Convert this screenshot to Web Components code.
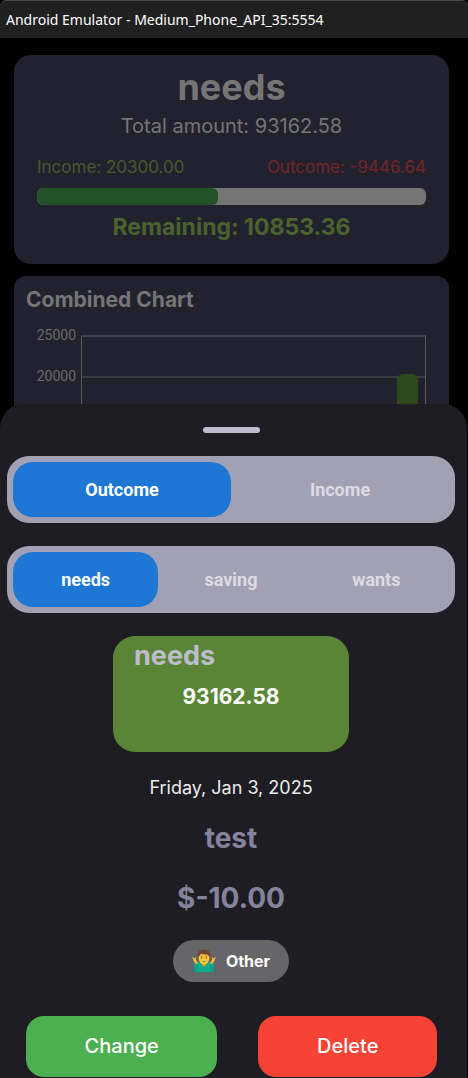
<!DOCTYPE html>
<html lang="en">
<head>
<meta charset="utf-8">
<title>Android Emulator - Medium_Phone_API_35:5554</title>
<style>
  body { margin: 0; background: #000; font-family: Inter, "Liberation Sans", sans-serif; }
</style>
</head>
<body>
<phone-window caption="Android Emulator - Medium_Phone_API_35:5554">
  <balance-card name="needs" total="93162.58" income="20300.00" outcome="-9446.64" remaining="10853.36" progress="46.5"></balance-card>
  <chart-card heading="Combined Chart"></chart-card>
  <bottom-sheet slot="sheet">
    <segment-control label="Transaction type" options="Outcome,Income"></segment-control>
    <segment-control label="Wallet" options="needs,saving,wants"></segment-control>
    <wallet-tile name="needs" amount="93162.58"></wallet-tile>
    <transaction-info date="Friday, Jan 3, 2025" name="test" amount="$-10.00"></transaction-info>
    <category-chip>Other</category-chip>
    <action-bar></action-bar>
  </bottom-sheet>
</phone-window>

<script>
class BaseElement extends HTMLElement {
  connectedCallback() {
    if (this.shadowRoot) return;
    this.attachShadow({ mode: "open" }).innerHTML = "<style>:host,*{box-sizing:border-box}</style>" + this.view(name => this.getAttribute(name));
  }
}

customElements.define("phone-window", class extends BaseElement {
  view(a) {
    return `<style>
      :host { display: flex; flex-direction: column; min-height: 100vh; }
      header { height: 38px; background: #202020; border-top: 1px solid #484848; border-radius: 6px 6px 0 0;
        display: flex; align-items: center; padding: 0 6px; color: #fff; font: 14px/20px "Noto Sans", "Open Sans", sans-serif; }
      .screen { flex: 1; position: relative; overflow: hidden; background: #000; }
      main { padding: 17px 19px 0 14px; display: grid; gap: 12px; }
      .overlay { position: absolute; left: 0; right: 1px; bottom: 0; }
    </style>
    <header>${a("caption")}</header>
    <div class="screen"><main><slot></slot></main><div class="overlay"><slot name="sheet"></slot></div></div>`;
  }
});

customElements.define("balance-card", class extends BaseElement {
  view(a) {
    return `<style>
      :host { display: block; background: #22222e; border-radius: 17px; padding: 10px 23px 21px; text-align: center; color: #757575; }
      h1 { margin: 0; font-size: 36px; line-height: 44px; font-weight: 700; }
      p { margin: 0; font-size: 20px; line-height: 34px; }
      .row { display: flex; justify-content: space-between; font-size: 17px; line-height: 24px; margin-top: 12px; }
      .income { color: #47592e; }
      .outcome { color: #722629; }
      .track { height: 17px; margin-top: 9px; border-radius: 6px; background: #757575; overflow: hidden; }
      .fill { height: 100%; width: ${a("progress")}%; background: #225228; border-radius: 6px; }
      .remaining { color: #4a622d; font-size: 23px; line-height: 32px; margin-top: 6px; font-weight: 700; }
    </style>
    <h1>${a("name")}</h1>
    <p>Total amount: ${a("total")}</p>
    <div class="row"><span class="income">Income: ${a("income")}</span><span class="outcome">Outcome: ${a("outcome")}</span></div>
    <div class="track"><div class="fill"></div></div>
    <div class="remaining">Remaining: ${a("remaining")}</div>`;
  }
});

customElements.define("chart-card", class extends BaseElement {
  view(a) {
    return `<style>
      :host { display: block; background: #22222e; border-radius: 12px; padding: 12px 23px 12px 12px; color: #757575; }
      h2 { margin: 0; font-size: 21px; line-height: 24px; font-weight: 700; }
      .chart { display: grid; grid-template-columns: 50px 1fr; column-gap: 5px; margin-top: 23px; }
      .axis { display: grid; grid-auto-rows: 41px; margin-top: -8px; text-align: right; font: 14px/17px Roboto, sans-serif; color: #6a6a6c; }
      .plot { height: 96px; border: 1px solid #5b5c5c; border-top: 2px solid #404148; border-bottom: 0;
        background: linear-gradient(#3a3b43, #3a3b43) 0 39px / 100% 2px no-repeat;
        display: flex; justify-content: flex-end; align-items: flex-end; padding-right: 7px; }
      .bar { width: 21px; height: 57px; border-radius: 6px 6px 0 0; background: #2e4a1d; }
    </style>
    <h2>${a("heading")}</h2>
    <div class="chart"><div class="axis"><span>25000</span><span>20000</span></div><div class="plot"><div class="bar"></div></div></div>`;
  }
});

customElements.define("bottom-sheet", class extends BaseElement {
  view() {
    return `<style>
      :host { display: flex; flex-direction: column; background: #1e1d23; border-radius: 24px 24px 0 0; padding: 23px 5px 1px 0; }
      .handle { width: 57px; height: 6px; border-radius: 3px; background: #c0bdce; align-self: center; }
    </style><div class="handle"></div><slot></slot>`;
  }
});

customElements.define("segment-control", class extends BaseElement {
  view(a) {
    const group = a("label").replace(/\s/g, "-");
    return `<style>
      :host { display: block; margin: 23px 7px 0 7px; }
      fieldset { margin: 0; min-width: 0; border: 0; padding: 6px; height: 67px; border-radius: 22px; background: #a2a1b4;
        display: grid; grid-auto-flow: column; grid-auto-columns: 1fr; }
      label { display: grid; place-items: center; border-radius: 20px; color: #dddce3; font: 700 18px/24px Roboto, sans-serif; cursor: pointer; }
      label:has(:checked) { background: #1e77d3; color: #fff; }
      input { appearance: none; margin: 0; width: 100%; height: 100%; grid-area: 1 / 1; border-radius: 20px; }
      span { grid-area: 1 / 1; pointer-events: none; }
    </style>
    <fieldset aria-label="${a("label")}">${a("options").split(",").map((o, i) =>
      `<label><input type="radio" name="${group}" value="${o}"${i ? "" : " checked"}><span>${o}</span></label>`).join("")}</fieldset>`;
  }
});

customElements.define("wallet-tile", class extends BaseElement {
  view(a) {
    return `<style>
      :host { display: block; align-self: center; width: 236px; height: 116px; margin-top: 23px; border-radius: 22px; background: #5a8536; padding: 3px 21px; }
      h3 { margin: 0; font-size: 27px; line-height: 34px; font-weight: 700; color: #bdbccb; }
      p { margin: 8px 0 0; font-size: 21px; line-height: 32px; font-weight: 700; color: #fff; text-align: center; }
    </style><h3>${a("name")}</h3><p>${a("amount")}</p>`;
  }
});

customElements.define("transaction-info", class extends BaseElement {
  view(a) {
    return `<style>
      :host { display: block; margin-top: 24px; text-align: center; }
      time { display: block; font-size: 18px; line-height: 24px; color: #ebebec; }
      .big { margin: 20px 0 0; font-size: 28px; line-height: 36px; font-weight: 700; color: #85839b; }
      .big + .big { margin-top: 24px; }
    </style><time datetime="2025-01-03">${a("date")}</time><p class="big">${a("name")}</p><p class="big">${a("amount")}</p>`;
  }
});

customElements.define("category-chip", class extends BaseElement {
  view() {
    return `<style>
      :host { display: flex; align-items: center; gap: 10px; align-self: center; height: 42px; margin-top: 24px; padding: 0 19px;
        border-radius: 21px; background: #666567; color: #fff; font-size: 16px; line-height: 24px; font-weight: 700; }
      svg { display: block; width: 24px; height: 24px; }
    </style>
    <svg viewBox="0 0 24 24" aria-hidden="true">
      <path d="M2.200 23.200v-8.700c0-.9.600-1.200 1.500-1.200h16.600c.9 0 1.500.3 1.500 1.200v8.700z" fill="#12a88e"/>
      <path d="M2.200 15.500l2.100 1.200 1.200 2.300v4.200H2.200zM21.800 15.500l-2.100 1.200-1.200 2.300v4.200h3.300z" fill="#08a08a"/>
      <path d="M3.200 14.500 1.500 11.200.2 8.600l.6-.6 1.700 1.600.6-1 .8.3-.1 2.100 2.300 3.500zM20.800 14.500l1.700-3.300 1.300-2.600-.6-.6-1.700 1.600-.6-1-.8.300.1 2.100-2.300 3.500z" fill="#fbc02d"/>
      <path d="M9.200 12h5.600v2.800L12 17.800l-2.800-3z" fill="#eda51b"/>
      <path d="M5.600 8C5 3 7.800.4 12 .4S19 3 18.400 8l-1 2H6.600z" fill="#6d4434"/>
      <path d="M6.600 7.400C8 6.600 8.700 5.400 9 4.500c1.600 1 4.500 1.300 6.300.8.400 1 1.200 1.800 2.100 2.100.2 4.600-2 7.800-5.400 7.800s-5.600-3.200-5.400-7.800z" fill="#fcc934"/>
      <circle cx="9.700" cy="9" r=".7" fill="#493326"/><circle cx="14.300" cy="9" r=".7" fill="#493326"/>
      <path d="M8.600 7.300q1-.7 2 0M13.400 7.300q1-.7 2 0M10.600 12.700q1.400-.8 2.800 0" fill="none" stroke="#795548" stroke-width=".7"/>
    </svg><slot></slot>`;
  }
});

customElements.define("action-bar", class extends BaseElement {
  view() {
    return `<style>
      :host { display: flex; gap: 41px; margin-top: 34px; padding: 0 25px 0 26px; }
      button { flex: 1 1 auto; height: 61px; border: 0; border-radius: 18px; padding: 0 16px 2px; color: #fff; font: 500 20px/24px Inter, sans-serif; cursor: pointer; }
      .change { background: #4caf50; }
      .delete { background: #f74336; }
    </style><button type="button" class="change">Change</button><button type="button" class="delete">Delete</button>`;
  }
});
</script>
</body>
</html>
